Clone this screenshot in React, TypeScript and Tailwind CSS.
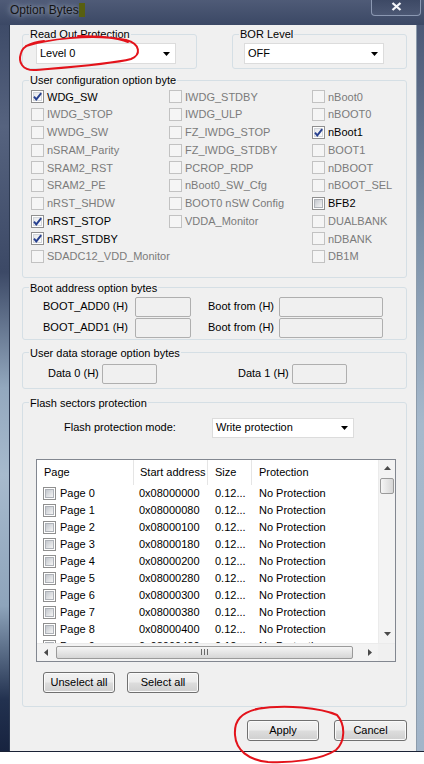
import React from 'react';

type Opt = { label: string; checked?: boolean; enabled?: boolean };

const col1: Opt[] = [
  { label: 'WDG_SW', checked: true, enabled: true },
  { label: 'IWDG_STOP' },
  { label: 'WWDG_SW' },
  { label: 'nSRAM_Parity' },
  { label: 'SRAM2_RST' },
  { label: 'SRAM2_PE' },
  { label: 'nRST_SHDW' },
  { label: 'nRST_STOP', checked: true, enabled: true },
  { label: 'nRST_STDBY', checked: true, enabled: true },
  { label: 'SDADC12_VDD_Monitor' },
];

const col2: Opt[] = [
  'IWDG_STDBY',
  'IWDG_ULP',
  'FZ_IWDG_STOP',
  'FZ_IWDG_STDBY',
  'PCROP_RDP',
  'nBoot0_SW_Cfg',
  'BOOT0 nSW Config',
  'VDDA_Monitor',
].map((label) => ({ label }));

const col3: Opt[] = [
  { label: 'nBoot0' },
  { label: 'nBOOT0' },
  { label: 'nBoot1', checked: true, enabled: true },
  { label: 'BOOT1' },
  { label: 'nDBOOT' },
  { label: 'nBOOT_SEL' },
  { label: 'BFB2', enabled: true },
  { label: 'DUALBANK' },
  { label: 'nDBANK' },
  { label: 'DB1M' },
];

const pages = Array.from({ length: 10 }, (_, i) => ({
  name: `Page ${i}`,
  addr: '0x' + (0x08000000 + i * 0x80).toString(16).toUpperCase().padStart(8, '0'),
}));

const CheckBox: React.FC<{ checked?: boolean; enabled?: boolean }> = ({ checked, enabled }) => {
  if (!enabled) {
    return <span className="block w-[13px] h-[13px] shrink-0 border border-[#c2c2c2] bg-[#f5f5f5]" />;
  }
  return (
    <span className="relative block w-[13px] h-[13px] shrink-0 border border-[#8f8f8f] bg-white p-[1px]">
      {checked ? (
        <span className="block w-full h-full border border-[#d2d5da] bg-gradient-to-br from-[#e6e8eb] to-[#fcfcfc]" />
      ) : (
        <span className="block w-full h-full border border-[#aeb2b8] bg-gradient-to-br from-[#c3c7cd] to-[#f5f5f5]" />
      )}
      {checked && (
        <svg className="absolute left-0 top-0" width="11" height="11" viewBox="0 0 11 11">
          <path d="M2 5.6 L4.3 8.4 L9.2 2.2" fill="none" stroke="#27408f" strokeWidth="1.9" />
        </svg>
      )}
    </span>
  );
};

const OptionRow: React.FC<{ opt: Opt }> = ({ opt }) => (
  <div className="flex items-center gap-[3px] h-[17.75px]">
    <CheckBox checked={opt.checked} enabled={opt.enabled} />
    <span className={opt.enabled ? 'text-black whitespace-nowrap' : 'text-[#7b7b7b] whitespace-nowrap'}>{opt.label}</span>
  </div>
);

const GroupBox: React.FC<{ title: string; className?: string; children: React.ReactNode }> = ({
  title,
  className,
  children,
}) => (
  <fieldset className={`border border-[#d5dfe5] rounded-[3px] ${className ?? ''}`}>
    <legend className="ml-[6px] px-[1px] leading-[14px]">{title}</legend>
    {children}
  </fieldset>
);

const Select: React.FC<{ value: string; width: string; height: string }> = ({ value, width, height }) => (
  <div className={`${width} ${height} bg-white border border-[#dcdcdc] flex items-center justify-between pl-[3px] pr-[5px]`}>
    <span>{value}</span>
    <svg width="7" height="4" viewBox="0 0 7 4">
      <path d="M0 0h7L3.5 4z" fill="#000" />
    </svg>
  </div>
);

const TextBox: React.FC<{ width: string }> = ({ width }) => (
  <div className={`${width} h-[20px] border border-[#afafaf] rounded-[2px] bg-[#f0f0f0]`} />
);

const WinButton: React.FC<{ label: string; width: string }> = ({ label, width }) => (
  <button className={`${width} h-[21px] rounded-[3px] border border-[#707070] bg-[linear-gradient(#f2f2f2_0%,#ebebeb_48%,#dddddd_52%,#cfcfcf_100%)] shadow-[inset_0_0_0_1px_#fafafa] text-[11px] text-black flex items-center justify-center`}>
    {label}
  </button>
);

const Tri: React.FC<{ dir: 'up' | 'down' | 'left' | 'right' }> = ({ dir }) => {
  const d = {
    up: 'M0 4h7L3.5 0z',
    down: 'M0 0h7L3.5 4z',
    left: 'M4 0v7L0 3.5z',
    right: 'M0 0v7L4 3.5z',
  }[dir];
  const vert = dir === 'up' || dir === 'down';
  return (
    <svg width={vert ? 7 : 4} height={vert ? 4 : 7} viewBox={vert ? '0 0 7 4' : '0 0 4 7'}>
      <path d={d} fill="#4a4a4a" />
    </svg>
  );
};

const PageTable: React.FC = () => (
  <div className="mt-[21px] w-[360px] h-[203px] border border-[#828790] bg-white flex flex-col">
    <div className="flex h-[183px]">
      <div className="w-[341px] flex flex-col overflow-hidden">
        <div className="flex h-[25px] shrink-0 items-center bg-white">
          <div className="w-[97px] h-full flex items-center pl-[7px] border-r border-[#e5e5e5]">Page</div>
          <div className="w-[74px] h-full flex items-center pl-[6px] border-r border-[#e5e5e5] whitespace-nowrap">Start address</div>
          <div className="w-[44px] h-full flex items-center pl-[7px] border-r border-[#e5e5e5]">Size</div>
          <div className="w-[126px] h-full flex items-center pl-[7px]">Protection</div>
        </div>
        {pages.map((p) => (
          <div key={p.name} className="flex h-[17px] shrink-0 items-center">
            <div className="w-[97px] flex items-center gap-[4px] pl-[6px]">
              <CheckBox enabled />
              <span>{p.name}</span>
            </div>
            <div className="w-[74px] pl-[5px]">{p.addr}</div>
            <div className="w-[44px] pl-[7px]">0.12...</div>
            <div className="w-[126px] pl-[7px] whitespace-nowrap">No Protection</div>
          </div>
        ))}
      </div>
      <div className="w-[17px] bg-[#f3f3f3] border-l border-[#ebebeb] flex flex-col">
        <div className="h-[17px] flex items-center justify-center">
          <Tri dir="up" />
        </div>
        <div className="mt-[1px] mx-[1px] h-[16px] rounded-[2px] border border-[#9a9a9a] bg-gradient-to-r from-[#f5f5f5] to-[#d6d6d6]" />
        <div className="flex-1" />
        <div className="h-[17px] flex items-center justify-center">
          <Tri dir="down" />
        </div>
      </div>
    </div>
    <div className="flex h-[18px] bg-[#f3f3f3] border-t border-[#ebebeb]">
      <div className="w-[17px] flex items-center justify-center">
        <Tri dir="left" />
      </div>
      <div className="ml-[2px] my-auto w-[297px] h-[13px] rounded-[2px] border border-[#9a9a9a] bg-gradient-to-b from-[#f5f5f5] to-[#d6d6d6] flex items-center justify-center gap-[1px]">
        <span className="block w-[1px] h-[6px] bg-[#6a6a6a]" />
        <span className="block w-[1px] h-[6px] bg-[#6a6a6a] ml-[1px]" />
        <span className="block w-[1px] h-[6px] bg-[#6a6a6a] ml-[1px]" />
      </div>
      <div className="flex-1" />
      <div className="w-[17px] flex items-center justify-center">
        <Tri dir="right" />
      </div>
      <div className="w-[17px] bg-[#f0f0f0]" />
    </div>
  </div>
);

const App: React.FC = () => {
  return (
    <div className="relative w-[424px] h-[764px] bg-white flex flex-col font-['Liberation_Sans',Arial,sans-serif] text-[11px] text-black overflow-hidden">
      {/* Title bar */}
      <div className="h-[25px] shrink-0 flex items-start bg-gradient-to-b from-[#4f5b77] to-[#3b4865]">
        <div className="pl-[10px] pt-[3px] flex items-start">
          <span className="text-[12px] leading-[15px] text-[#141414] [text-shadow:0_0_5px_#aab3c4,0_0_9px_#8994aa]">
            Option Bytes
          </span>
          <span className="block w-[6px] h-[14px] bg-[#585f10]" />
        </div>
        <div className="ml-auto mr-[3px] w-[50px] h-[16px] border border-t-0 border-[#8b98b2] rounded-b-[4px] bg-gradient-to-b from-[#3d4965] to-[#4c5874] flex items-start justify-center pt-[2px]">
          <svg width="11" height="9" viewBox="0 0 11 9">
            <path d="M1.5 1 L9.5 8 M9.5 1 L1.5 8" stroke="#f4f6fa" strokeWidth="2.3" />
          </svg>
        </div>
      </div>

      <div className="flex h-[726px] shrink-0">
        {/* Left frame */}
        <div className="w-[10px] border-r border-[#2d3a52] bg-[linear-gradient(180deg,#3e4b68_0%,#56637f_14%,#3c4966_34%,#93a8be_50%,#a7bacd_62%,#8ea4bb_80%,#22314f_93%,#17233f_100%)]" />

        {/* Client */}
        <div className="w-[406px] bg-[#f0f0f0] pt-[2px] pl-[12px] pr-[9px] flex flex-col">
          <div className="flex gap-[35px]">
            <GroupBox title="Read Out Protection" className="w-[175px] pb-[4px]">
              <div className="pl-[13px] pt-[2px]">
                <Select value="Level 0" width="w-[140px]" height="h-[21px]" />
              </div>
            </GroupBox>
            <GroupBox title="BOR Level" className="w-[175px] pb-[4px]">
              <div className="pl-[11px] pt-[2px]">
                <Select value="OFF" width="w-[140px]" height="h-[21px]" />
              </div>
            </GroupBox>
          </div>

          <GroupBox title="User configuration option byte" className="mt-[4px]">
            <div className="grid grid-cols-[138px_143px_1fr] pl-[8px] pt-[1px] pb-[11px]">
              <div className="flex flex-col">
                {col1.map((o) => (
                  <OptionRow key={o.label} opt={o} />
                ))}
              </div>
              <div className="flex flex-col">
                {col2.map((o) => (
                  <OptionRow key={o.label} opt={o} />
                ))}
              </div>
              <div className="flex flex-col">
                {col3.map((o) => (
                  <OptionRow key={o.label} opt={o} />
                ))}
              </div>
            </div>
          </GroupBox>

          <GroupBox title="Boot address option bytes" className="mt-[3px]">
            <div className="flex flex-col gap-[1px] pt-[2px] pb-[1px] pl-[20px]">
              {['BOOT_ADD0 (H)', 'BOOT_ADD1 (H)'].map((l) => (
                <div key={l} className="flex items-center h-[20px]">
                  <span className="w-[92px]">{l}</span>
                  <TextBox width="w-[56px]" />
                  <span className="ml-[17px] w-[71px]">Boot from (H)</span>
                  <TextBox width="w-[104px]" />
                </div>
              ))}
            </div>
          </GroupBox>

          <GroupBox title="User data storage option bytes" className="mt-[6px]">
            <div className="flex items-center h-[20px] mt-[4px] mb-[4px] pl-[25px]">
              <span className="w-[54px]">Data 0 (H)</span>
              <TextBox width="w-[55px]" />
              <span className="ml-[81px] w-[54px]">Data 1 (H)</span>
              <TextBox width="w-[55px]" />
            </div>
          </GroupBox>

          <GroupBox title="Flash sectors protection" className="mt-[7px]">
            <div className="flex flex-col pl-[13px] pt-[8px] pb-[13px]">
              <div className="flex items-center">
                <span className="ml-[28px] w-[148px]">Flash protection mode:</span>
                <Select value="Write protection" width="w-[142px]" height="h-[20px]" />
              </div>
              <PageTable />
              <div className="mt-[10px] pl-[7px] flex gap-[12px]">
                <WinButton label="Unselect all" width="w-[72px]" />
                <WinButton label="Select all" width="w-[72px]" />
              </div>
            </div>
          </GroupBox>

          <div className="mt-[13px] flex justify-end gap-[15px]">
            <WinButton label="Apply" width="w-[72px]" />
            <WinButton label="Cancel" width="w-[73px]" />
          </div>
        </div>

        {/* Right frame */}
        <div className="w-[8px] border-l border-[#8c9bab] bg-[linear-gradient(180deg,#4b5876_0%,#7f93aa_30%,#a6b9cc_55%,#a2b5c9_100%)]" />
      </div>

      <div className="h-[1px] shrink-0 bg-[#1a2236]" />

      {/* Hand-drawn red marks */}
      <svg className="absolute left-0 top-0 pointer-events-none" width="424" height="764" viewBox="0 0 424 764">
        <path
          d="M26 46 C 45 40, 90 33, 126 40 C 141 44, 141 55, 131 59 C 112 64, 72 67, 36 70 C 22 71, 18 62, 21 53 C 23 46, 30 43, 44 41 M 78 36 C 95 36, 115 37, 128 42"
          fill="none"
          stroke="#e3131b"
          strokeWidth="2"
          strokeLinecap="round"
        />
        <path
          d="M256 709 C 286 704, 321 708, 337 715 C 346 725, 345 742, 336 750 C 321 760, 292 763, 268 762 C 248 760, 236 750, 235 735 C 234 721, 240 712, 262 708"
          fill="none"
          stroke="#e3131b"
          strokeWidth="2"
          strokeLinecap="round"
        />
      </svg>
    </div>
  );
};

export default App;
